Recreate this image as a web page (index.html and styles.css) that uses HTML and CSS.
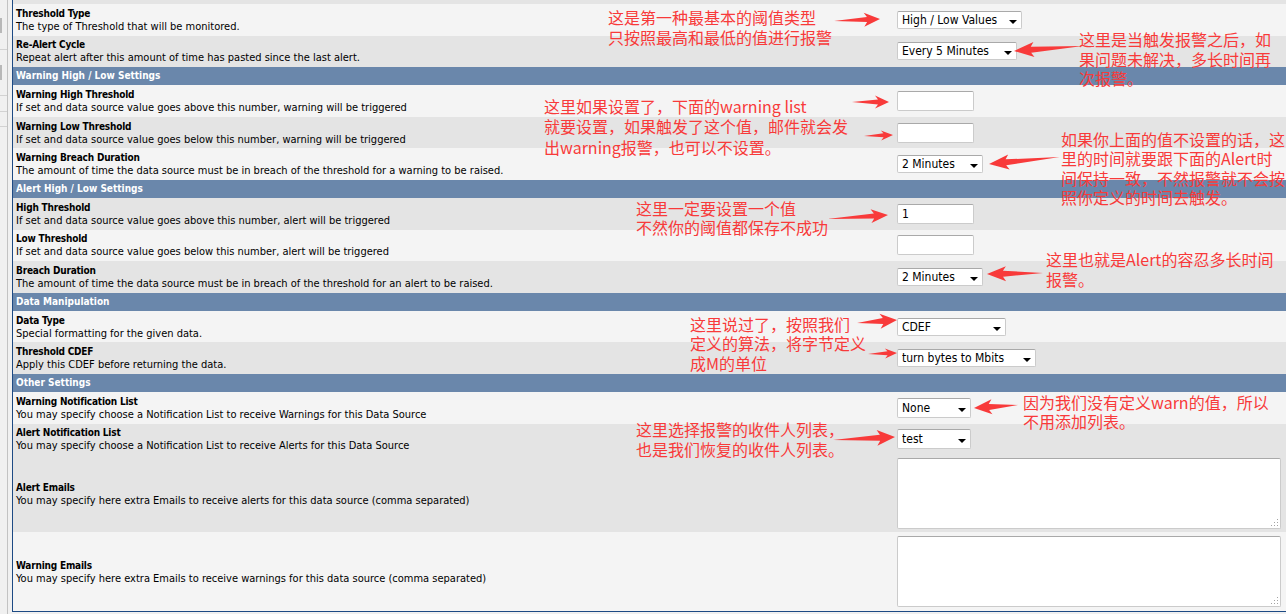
FILE: index.html
```html
<!DOCTYPE html>
<html lang="en">
<head>
    <meta charset="UTF-8">
    <title>Threshold Settings</title>
    <link rel="stylesheet" href="styles.css">
</head>
<body>
<div class="page">
    <div class="sidebar">
        <div class="tab"></div>
        <div class="rule"></div>
        <div class="tab tab-2"></div>
        <div class="rule rule-2"></div>
        <div class="rule rule-2"></div>
        <div class="rule rule-3"></div>
    </div>

    <div class="panel">
        <div class="row-cut"></div>

        <div class="row light">
            <div class="label"><span class="title">Threshold Type</span><span class="desc">The type of Threshold that will be monitored.</span></div>
            <div class="field"><span class="select w-type"><select><option>High / Low Values</option></select></span></div>
        </div>
        <div class="row dark">
            <div class="label"><span class="title">Re-Alert Cycle</span><span class="desc">Repeat alert after this amount of time has pasted since the last alert.</span></div>
            <div class="field"><span class="select w-cycle"><select><option>Every 5 Minutes</option></select></span></div>
        </div>

        <div class="section"><span>Warning High / Low Settings</span></div>
        <div class="row light">
            <div class="label"><span class="title">Warning High Threshold</span><span class="desc">If set and data source value goes above this number, warning will be triggered</span></div>
            <div class="field"><input type="text" class="text-input"></div>
        </div>
        <div class="row dark">
            <div class="label"><span class="title">Warning Low Threshold</span><span class="desc">If set and data source value goes below this number, warning will be triggered</span></div>
            <div class="field"><input type="text" class="text-input"></div>
        </div>
        <div class="row light">
            <div class="label"><span class="title">Warning Breach Duration</span><span class="desc">The amount of time the data source must be in breach of the threshold for a warning to be raised.</span></div>
            <div class="field"><span class="select w-dur"><select><option>2 Minutes</option></select></span></div>
        </div>

        <div class="section"><span>Alert High / Low Settings</span></div>
        <div class="row dark">
            <div class="label"><span class="title">High Threshold</span><span class="desc">If set and data source value goes above this number, alert will be triggered</span></div>
            <div class="field"><input type="text" class="text-input" value="1"></div>
        </div>
        <div class="row light">
            <div class="label"><span class="title">Low Threshold</span><span class="desc">If set and data source value goes below this number, alert will be triggered</span></div>
            <div class="field"><input type="text" class="text-input"></div>
        </div>
        <div class="row dark">
            <div class="label"><span class="title">Breach Duration</span><span class="desc">The amount of time the data source must be in breach of the threshold for an alert to be raised.</span></div>
            <div class="field"><span class="select w-dur"><select><option>2 Minutes</option></select></span></div>
        </div>

        <div class="section"><span>Data Manipulation</span></div>
        <div class="row light">
            <div class="label"><span class="title">Data Type</span><span class="desc">Special formatting for the given data.</span></div>
            <div class="field"><span class="select w-dtype"><select><option>CDEF</option></select></span></div>
        </div>
        <div class="row dark">
            <div class="label"><span class="title">Threshold CDEF</span><span class="desc">Apply this CDEF before returning the data.</span></div>
            <div class="field"><span class="select w-cdef"><select><option>turn bytes to Mbits</option></select></span></div>
        </div>

        <div class="section"><span>Other Settings</span></div>
        <div class="row light">
            <div class="label"><span class="title">Warning Notification List</span><span class="desc">You may specify choose a Notification List to receive Warnings for this Data Source</span></div>
            <div class="field"><span class="select w-list"><select><option>None</option></select></span></div>
        </div>
        <div class="row dark">
            <div class="label"><span class="title">Alert Notification List</span><span class="desc">You may specify choose a Notification List to receive Alerts for this Data Source</span></div>
            <div class="field"><span class="select w-list"><select><option>test</option></select></span></div>
        </div>
        <div class="row dark row-alert-mail">
            <div class="label"><span class="title">Alert Emails</span><span class="desc">You may specify here extra Emails to receive alerts for this data source (comma separated)</span></div>
            <div class="field">
                <span class="area"><textarea></textarea>
                    <svg class="grip" width="7" height="7" viewBox="0 0 7 7"><rect x="6" y="0" width="1" height="1"/><rect x="3" y="3" width="1" height="1"/><rect x="6" y="3" width="1" height="1"/><rect x="0" y="6" width="1" height="1"/><rect x="3" y="6" width="1" height="1"/><rect x="6" y="6" width="1" height="1"/></svg>
                </span>
            </div>
        </div>
        <div class="row light row-warn-mail">
            <div class="label"><span class="title">Warning Emails</span><span class="desc">You may specify here extra Emails to receive warnings for this data source (comma separated)</span></div>
            <div class="field">
                <span class="area"><textarea></textarea>
                    <svg class="grip" width="7" height="7" viewBox="0 0 7 7"><rect x="6" y="0" width="1" height="1"/><rect x="3" y="3" width="1" height="1"/><rect x="6" y="3" width="1" height="1"/><rect x="0" y="6" width="1" height="1"/><rect x="3" y="6" width="1" height="1"/><rect x="6" y="6" width="1" height="1"/></svg>
                </span>
            </div>
        </div>
    </div>

    <!-- annotations drawn over the form -->
    <div class="note n1">这是第一种最基本的阈值类型<br>只按照最高和最低的值进行报警</div>
    <div class="note n2">这里是当触发报警之后，如<br>果问题未解决，多长时间再<br>次报警。</div>
    <div class="note n3">这里如果设置了，下面的warning list<br>就要设置，如果触发了这个值，邮件就会发<br>出warning报警，也可以不设置。</div>
    <div class="note n4">如果你上面的值不设置的话，这<br>里的时间就要跟下面的Alert时<br>间保持一致，不然报警就不会按<br>照你定义的时间去触发。</div>
    <div class="note n5">这里一定要设置一个值<br>不然你的阈值都保存不成功</div>
    <div class="note n6">这里也就是Alert的容忍多长时间<br>报警。</div>
    <div class="note n7">这里说过了，按照我们<br>定义的算法，将字节定义<br>成M的单位</div>
    <div class="note n8">因为我们没有定义warn的值，所以<br>不用添加列表。</div>
    <div class="note n9">这里选择报警的收件人列表，<br>也是我们恢复的收件人列表。</div>

    <svg class="arrows" width="1286" height="614" viewBox="0 0 1286 614">
        <polygon transform="translate(880,19) rotate(-2.5)" points="0,0 -16,-7 -13,-2.5 -46,0 -13,2.5 -16,7"/>
        <polygon transform="translate(1014,51) rotate(175.9)" points="0,0 -20,-7.5 -17,-3 -69,0 -17,3 -20,7.5"/>
        <polygon transform="translate(889,102)" points="0,0 -14,-6.5 -11,-2.5 -37,0 -11,2.5 -14,6.5"/>
        <polygon transform="translate(893,135) rotate(-2)" points="0,0 -12,-5 -9.5,-2 -29,0 -9.5,2 -12,5"/>
        <polygon transform="translate(989,164) rotate(174.4)" points="0,0 -20,-7.5 -17,-3 -71,0 -17,3 -20,7.5"/>
        <polygon transform="translate(888,215) rotate(-3.75)" points="0,0 -17,-7 -14,-2.5 -61,0 -14,2.5 -17,7"/>
        <polygon transform="translate(987,274) rotate(179)" points="0,0 -19,-7.5 -16,-3 -56,0 -16,3 -19,7.5"/>
        <polygon transform="translate(897,320) rotate(-4.3)" points="0,0 -17,-7.5 -14,-3 -40,0 -14,3 -17,7.5"/>
        <polygon transform="translate(897,353) rotate(-2)" points="0,0 -12,-5 -9.5,-2 -29,0 -9.5,2 -12,5"/>
        <polygon transform="translate(974,408) rotate(176)" points="0,0 -18,-7.5 -15,-3 -44,0 -15,3 -18,7.5"/>
        <polygon transform="translate(895,437) rotate(-2.8)" points="0,0 -18,-8 -15,-3 -62,0 -15,3 -18,8"/>
    </svg>
</div>
</body>
</html>
```

FILE: styles.css
```css
body {
    margin: 0;
    background-color: #f0f0f0;
    font-family: "DejaVu Sans Condensed", "DejaVu Sans", sans-serif;
    color: #000;
    overflow: hidden;
}
.page {
    position: relative;
    display: flex;
    width: 1286px;
    height: 614px;
    overflow: hidden;
}
.sidebar {
    flex: none;
    width: 7px;
    border-right: 1px solid #c2c2c2;
}
.tab {
    width: 2px;
    height: 15px;
    margin-top: 18px;
    background-color: #b8b8b8;
}
.tab-2 {
    margin-top: 15px;
}
.rule {
    height: 1px;
    margin-top: 16px;
    background-color: #d2d2d2;
}
.rule-2 {
    margin-top: 15px;
}
.rule-3 {
    margin-top: 14px;
}
.panel {
    flex: none;
    width: 1290px;
    height: 611px;
    margin-left: 4px;
    border-left: 1px solid #1d4a84;
    border-bottom: 1px solid #1d4a84;
    background-color: #f4f4f4;
}
.row-cut {
    height: 4px;
    background-color: #e4e4e4;
}
.row {
    display: grid;
    grid-template-columns: 884px 1fr;
    align-items: center;
    height: 31.5px;
}
.light {
    background-color: #f4f4f4;
}
.dark {
    background-color: #e4e4e4;
}
.row-alert-mail {
    height: 77px;
}
.row-warn-mail {
    height: 79px;
}
.label {
    padding-left: 3px;
}
.title {
    display: block;
    width: fit-content;
    font-size: 10px;
    font-weight: bold;
    line-height: 13px;
    letter-spacing: -0.2px;
}
.desc {
    display: block;
    width: fit-content;
    font-size: 11px;
    line-height: 13px;
}
.section {
    height: 18.25px;
    padding-left: 3px;
    background-color: #6a87ab;
    color: #fff;
    font-size: 10px;
    font-weight: bold;
    line-height: 18px;
}
.field {
    display: flex;
    align-items: center;
}
.select {
    position: relative;
    display: inline-block;
}
.select select {
    appearance: none;
    -webkit-appearance: none;
    display: block;
    width: 100%;
    height: 18px;
    margin: 0;
    padding: 0 0 0 4px;
    border: 1px solid #cbcbcb;
    border-top-color: #a9a9a9;
    border-radius: 2px;
    background-color: #fff;
    font-family: inherit;
    font-size: 12px;
    color: #000;
}
.select::after {
    content: "";
    position: absolute;
    right: 5px;
    top: 9px;
    border-left: 4px solid transparent;
    border-right: 4px solid transparent;
    border-top: 4px solid #000;
}
.w-type { width: 125px; }
.w-cycle { width: 120px; }
.w-dur { width: 86px; }
.w-dtype { width: 109px; }
.w-cdef { width: 139px; }
.w-list { width: 74px; }
.w-list select {
    height: 20px;
}
.w-list::after {
    top: 10px;
}
.text-input {
    box-sizing: border-box;
    width: 77px;
    height: 20px;
    margin: 0;
    padding: 0 4px;
    border: 1px solid #cbcbcb;
    border-top-color: #a9a9a9;
    border-radius: 2px;
    background-color: #fff;
    font-family: inherit;
    font-size: 12px;
}
.area {
    position: relative;
    display: block;
}
.area textarea {
    display: block;
    box-sizing: border-box;
    width: 384px;
    height: 71px;
    margin: 0;
    border: 1px solid #cbcbcb;
    border-top-color: #a9a9a9;
    border-radius: 2px;
    background-color: #fff;
    resize: none;
}
.grip {
    position: absolute;
    right: 3px;
    bottom: 3px;
    fill: #a3a3a3;
}
.note {
    position: absolute;
    font-family: "Noto Sans CJK SC", sans-serif;
    font-size: 16px;
    line-height: 19.5px;
    color: #f83a3a;
    white-space: nowrap;
}
.n1 { left: 608px; top: 8px; }
.n2 { left: 1079px; top: 30px; }
.n3 { left: 544px; top: 95.5px; line-height: 20.5px; }
.n4 { left: 1061px; top: 129.5px; }
.n5 { left: 636px; top: 198.5px; }
.n6 { left: 1046px; top: 250px; }
.n7 { left: 690px; top: 314.5px; line-height: 19.75px; }
.n8 { left: 1023px; top: 392.5px; }
.n9 { left: 636px; top: 419px; line-height: 20px; }
.arrows {
    position: absolute;
    left: 0;
    top: 0;
    fill: #f83a3a;
    pointer-events: none;
}
```
